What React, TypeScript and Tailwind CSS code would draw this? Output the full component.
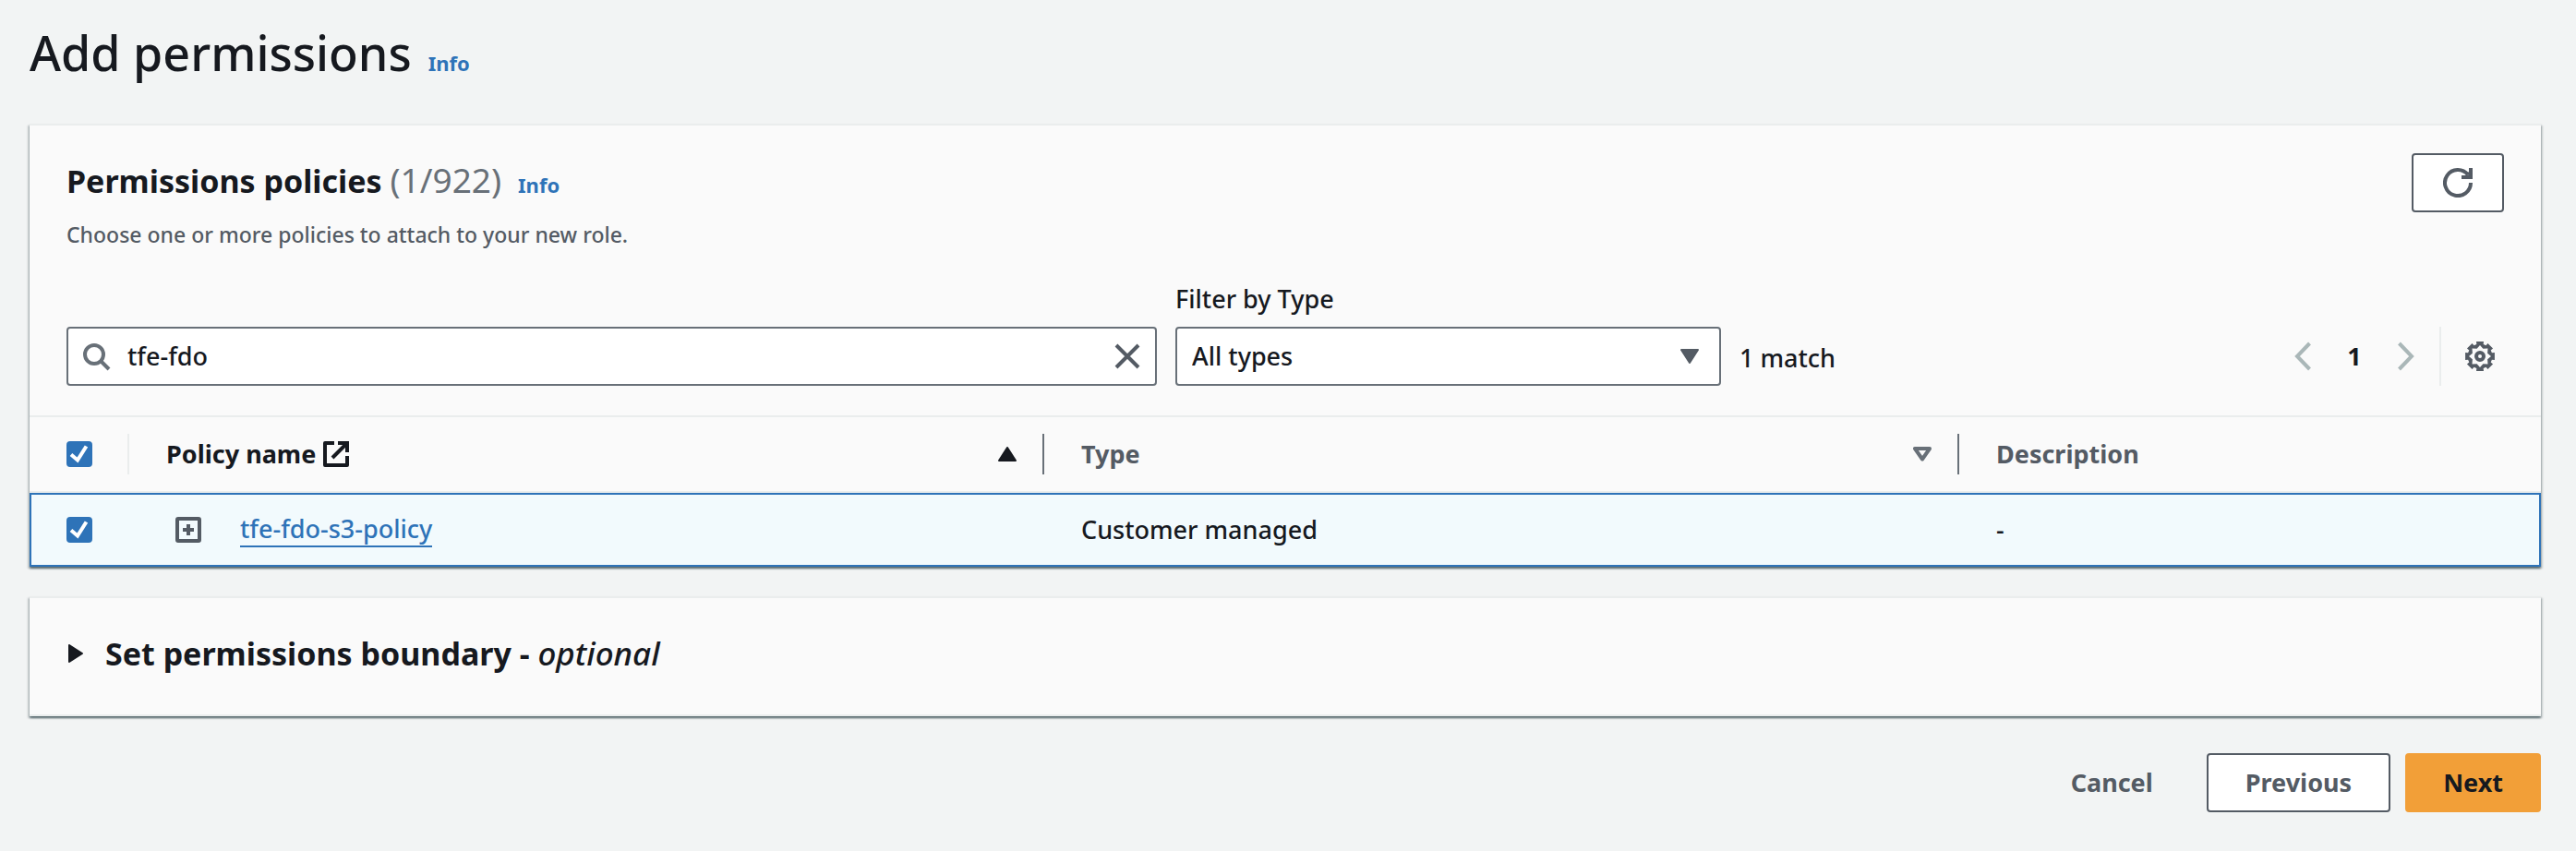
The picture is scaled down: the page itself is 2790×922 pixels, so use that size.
import { useState, type ReactNode } from "react";

const font = "font-['Noto_Sans','Open_Sans',sans-serif]";

const polar = (radius: number, degrees: number) => {
  const a = (degrees * Math.PI) / 180;
  return `${(16 + radius * Math.sin(a)).toFixed(2)} ${(16 - radius * Math.cos(a)).toFixed(2)}`;
};
const teeth = [0, 45, 90, 135, 180, 225, 270, 315];
const gearOuter = teeth.flatMap((t) => [
  polar(13.4, t - 16),
  polar(16.4, t - 14),
  polar(16.4, t + 14),
  polar(13.4, t + 16),
]);
const gearInner = teeth.flatMap((t) => [polar(12, t), polar(8.8, t + 22.5)]);
const gearPath = `M${gearOuter.join("L")}ZM${gearInner.join("L")}Z`;

function Checkbox({ label }: { label: string }) {
  const [checked, setChecked] = useState(true);
  return (
    <label className="grid size-7 cursor-pointer">
      <input
        type="checkbox"
        aria-label={label}
        checked={checked}
        onChange={() => setChecked(!checked)}
        className="col-start-1 row-start-1 size-7 appearance-none rounded-sm border-2 border-[#687078] bg-white checked:border-[#2e73b8] checked:bg-[#2e73b8]"
      />
      {checked && (
        <svg viewBox="0 0 28 28" className="pointer-events-none col-start-1 row-start-1 size-7" fill="none" stroke="#fff" strokeWidth="4">
          <path d="M5 14.5 L12 20.5 L21.5 5.5" />
        </svg>
      )}
    </label>
  );
}

function Info() {
  return (
    <a href="#info" className="text-[22px] leading-8 font-bold text-[#2e73b8]">
      Info
    </a>
  );
}

function Button({ children, primary }: { children: ReactNode; primary?: boolean }) {
  return (
    <button
      type="button"
      className={
        primary
          ? "h-16 rounded border-2 border-[#f29f38] bg-[#f29f38] px-[39px] font-bold text-[#16191f]"
          : "h-16 rounded border-2 border-[#545b64] bg-white px-10 font-bold text-[#545b64]"
      }
    >
      {children}
    </button>
  );
}

const card =
  "border-t-2 border-[#eaeded] bg-[#fafafa] shadow-[0_2px_2px_0_rgba(0,28,36,0.5),2px_2px_2px_0_rgba(0,28,36,0.15),-2px_2px_2px_0_rgba(0,28,36,0.15)]";

export default function App() {
  const [query, setQuery] = useState("tfe-fdo");
  return (
    <main className={`${font} min-h-screen bg-[#f2f4f4] pt-[21px] pr-[38px] pb-10 pl-8 text-[27px] leading-10 font-medium text-[#16191f]`}>
      <header className="flex h-[113px] items-baseline gap-[18px]">
        <h1 className="text-[52px] leading-[72px] font-medium">Add permissions</h1>
        <Info />
      </header>

      <section className={card}>
        <div className="flex items-start justify-between px-10 pt-[30px]">
          <div>
            <div className="flex items-baseline gap-[18px]">
              <h2 className="text-[34px] leading-[60px] font-bold">
                Permissions policies <span className="text-[37px] leading-none font-normal text-[#687078]">(1/922)</span>
              </h2>
              <Info />
            </div>
            <p className="mt-2 text-[23px] leading-10 text-[#545b64]">
              Choose one or more policies to attach to your new role.
            </p>
          </div>
          <button type="button" aria-label="Refresh" className="grid h-16 w-[100px] place-items-center rounded border-2 border-[#545b64] bg-white">
            <svg viewBox="0 0 32 32" className="size-8" fill="none" stroke="#545b64" strokeWidth="4">
              <path d="M30 16 A14 14 0 1 1 27 7.4" />
              <path d="M30 0 V10 H20" />
              <path d="M24 5 L30 10 V4" fill="#545b64" stroke="none" />
            </svg>
          </button>
        </div>

        <div className="mt-[30px] flex items-end px-10 pb-8">
          <div className="flex h-16 w-[1181px] shrink items-center gap-4 rounded border-2 border-[#687078] bg-white pr-[14px] pl-4">
            <svg viewBox="0 0 32 32" className="size-8" fill="none" stroke="#687078" strokeWidth="4">
              <circle cx="12" cy="14" r="10" />
              <path d="M19 21 L28 30" />
            </svg>
            <input
              aria-label="Search policies"
              value={query}
              onChange={(e) => setQuery(e.target.value)}
              className="min-w-0 flex-1 bg-transparent outline-none"
            />
            <button type="button" aria-label="Clear" onClick={() => setQuery("")}>
              <svg viewBox="0 0 32 32" className="size-8" fill="none" stroke="#545b64" strokeWidth="4">
                <path d="M4 4 L28 28 M28 4 L4 28" />
              </svg>
            </button>
          </div>
          <div className="ml-5 w-[591px] shrink">
            <label htmlFor="type-filter" className="block pb-[10px]">
              Filter by Type
            </label>
            <div className="grid items-center">
              <select
                id="type-filter"
                className="col-start-1 row-start-1 h-16 w-full appearance-none rounded border-2 border-[#687078] bg-white px-4"
              >
                <option>All types</option>
                <option>Customer managed</option>
              </select>
              <svg viewBox="0 0 20 16" className="pointer-events-none col-start-1 row-start-1 mr-6 h-4 w-5 justify-self-end">
                <path d="M1 1 H19 L10 15 Z" fill="#545b64" stroke="#545b64" strokeWidth="2" strokeLinejoin="round" />
              </svg>
            </div>
          </div>
          <p className="ml-5 pb-[10px]">1 match</p>
          <div className="ml-auto flex h-16 items-center">
            <button type="button" disabled aria-label="Previous page">
              <svg viewBox="0 0 18 32" className="h-8 w-[18px]" fill="none" stroke="#aab7b8" strokeWidth="4">
                <path d="M16.5 2 L3 16 L16.5 30" />
              </svg>
            </button>
            <button type="button" className="w-[94px] font-bold">1</button>
            <button type="button" disabled aria-label="Next page">
              <svg viewBox="0 0 18 32" className="h-8 w-[18px]" fill="none" stroke="#aab7b8" strokeWidth="4">
                <path d="M1.5 2 L15 16 L1.5 30" />
              </svg>
            </button>
            <div className="ml-[27px] h-16 w-[2px] bg-[#eaeded]" />
            <button type="button" aria-label="Preferences" className="mr-[10px] ml-[26px]">
              <svg viewBox="0 0 32 32" className="size-8">
                <path d={gearPath} fill="#545b64" fillRule="evenodd" />
                <circle cx="16" cy="16" r="4" fill="none" stroke="#545b64" strokeWidth="4" />
              </svg>
            </button>
          </div>
        </div>

        <table className="w-full table-fixed border-separate border-spacing-0 text-left">
          <colgroup>
            <col className="w-[108px]" />
            <col className="w-[991px]" />
            <col className="w-[991px]" />
            <col />
          </colgroup>
          <thead>
            <tr className="h-[84px] text-[#545b64]">
              <th className="border-y-2 border-[#eaeded] p-0 pl-10 font-bold">
                <div className="flex h-11 items-center border-r-2 border-[#eaeded]">
                  <Checkbox label="Select all policies" />
                </div>
              </th>
              <th className="border-y-2 border-[#eaeded] p-0 pl-10 font-bold text-[#16191f]">
                <div className="flex h-11 items-center border-r-2 border-[#687078] pr-7">
                  <span>Policy name</span>
                  <svg viewBox="0 0 28 28" className="ml-2 size-7" fill="none" stroke="#16191f" strokeWidth="4">
                    <path d="M12 2 H2 V26 H26 V16" strokeLinejoin="round" />
                    <path d="M16 2 H26 V12 M26 2 L10 18" />
                  </svg>
                  <svg viewBox="0 0 20 16" className="ml-auto h-4 w-5">
                    <path d="M1 15 H19 L10 1 Z" fill="#16191f" stroke="#16191f" strokeWidth="2" strokeLinejoin="round" />
                  </svg>
                </div>
              </th>
              <th className="border-y-2 border-[#eaeded] p-0 pl-10 font-bold">
                <div className="flex h-11 items-center justify-between border-r-2 border-[#687078] pr-7">
                  <span>Type</span>
                  <svg viewBox="0 0 20 16" className="h-4 w-5">
                    <path d="M2 2 H18 L10 13.5 Z" fill="none" stroke="#687078" strokeWidth="4" strokeLinejoin="round" />
                  </svg>
                </div>
              </th>
              <th className="border-y-2 border-[#eaeded] p-0 pl-10 font-bold">Description</th>
            </tr>
          </thead>
          <tbody>
            <tr className="h-20 bg-[#f2fafd] outline-2 -outline-offset-2 outline-[#2e73b8]">
              <td className="p-0 pl-10">
                <Checkbox label="Select tfe-fdo-s3-policy" />
              </td>
              <td className="p-0 pl-[50px]">
                <div className="flex items-center gap-[42px]">
                  <button type="button" aria-label="Expand tfe-fdo-s3-policy">
                    <svg viewBox="0 0 28 28" className="size-7" fill="none" stroke="#545b64" strokeWidth="4">
                      <rect x="2" y="2" width="24" height="24" rx="1" />
                      <path d="M14 8 V20 M8 14 H20" />
                    </svg>
                  </button>
                  <a href="#policy" className="border-b-2 border-[#2e73b8] leading-9 text-[#2e73b8]">
                    tfe-fdo-s3-policy
                  </a>
                </div>
              </td>
              <td className="p-0 pl-10">Customer managed</td>
              <td className="p-0 pl-10">-</td>
            </tr>
          </tbody>
        </table>
      </section>

      <section className={`${card} mt-8 border-b-2`}>
        <button type="button" className="flex h-[126px] w-full items-center px-[42px] pb-[6px] text-left">
          <svg viewBox="0 0 16 20" className="h-5 w-4">
            <path d="M1 1 V19 L15 10 Z" fill="#16191f" stroke="#16191f" strokeWidth="2" strokeLinejoin="round" />
          </svg>
          <span className="ml-6 text-[34px] leading-[60px] font-bold">
            Set permissions boundary - <i className="text-[35px] leading-none font-medium">optional</i>
          </span>
        </button>
      </section>

      <footer className="mt-10 flex justify-end">
        <button type="button" className="mr-[58px] h-16 font-bold text-[#545b64]">Cancel</button>
        <Button>Previous</Button>
        <div className="w-4" />
        <Button primary>Next</Button>
      </footer>
    </main>
  );
}
